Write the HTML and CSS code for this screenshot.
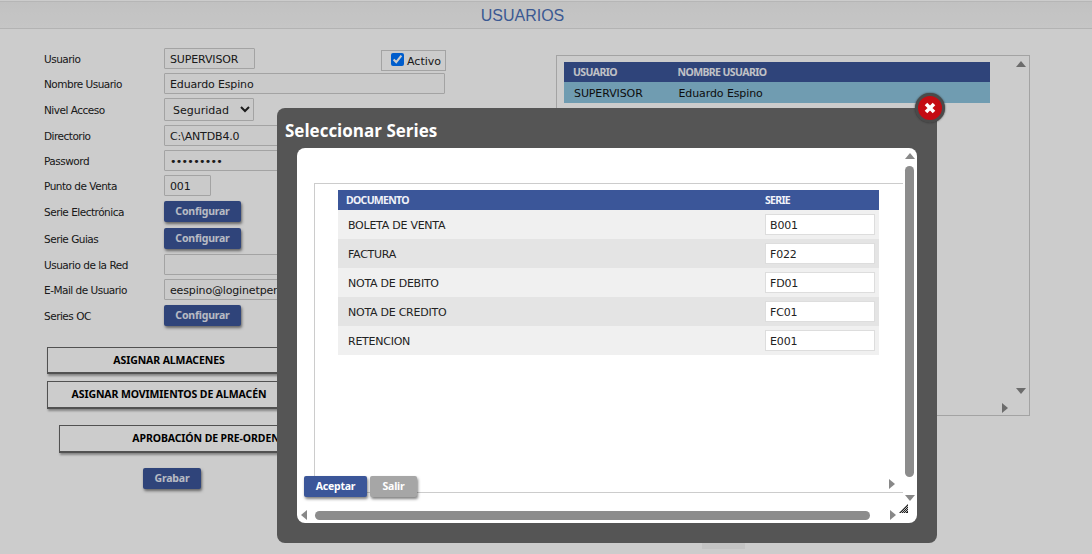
FILE: index.html
```html
<!DOCTYPE html>
<html lang="es">
<head>
<meta charset="utf-8">
<title>Usuarios</title>
<link rel="stylesheet" href="styles.css">
</head>
<body>
<header class="topbar"><h1>USUARIOS</h1></header>
<main class="content">
  <section class="form">
    <div class="row h25"><label>Usuario</label><input class="f91" value="SUPERVISOR"><label class="active"><input type="checkbox" checked> <span class="active-text">Activo</span></label></div>
    <div class="row h25"><label>Nombre Usuario</label><input class="f281" value="Eduardo Espino"></div>
    <div class="row h27 nudge"><label>Nivel Acceso</label><select class="sel"><option>Seguridad</option></select></div>
    <div class="row h25"><label>Directorio</label><input class="f281" value="C:\ANTDB4.0"></div>
    <div class="row h25"><label>Password</label><input class="f281 pass" type="password" value="123456789"></div>
    <div class="row h26"><label>Punto de Venta</label><input class="f47" value="001"></div>
    <div class="row h27"><label>Serie Electrónica</label><button class="btn cfg">Configurar</button></div>
    <div class="row h26"><label>Serie Guias</label><button class="btn cfg">Configurar</button></div>
    <div class="row h25"><label>Usuario de la Red</label><input class="f281"></div>
    <div class="row h26"><label>E-Mail de Usuario</label><input class="f281" value="eespino@loginetperu.com"></div>
    <div class="row h21"><label>Series OC</label><button class="btn cfg">Configurar</button></div>
    <button class="wide first">ASIGNAR ALMACENES</button>
    <button class="wide second">ASIGNAR MOVIMIENTOS DE ALMACÉN</button>
    <button class="wide third">APROBACIÓN DE PRE-ORDEN</button>
    <button class="btn save">Grabar</button>
  </section>
  <section class="panel">
    <table class="users">
      <thead><tr><th class="uc">USUARIO</th><th>NOMBRE USUARIO</th></tr></thead>
      <tbody><tr><td>SUPERVISOR</td><td>Eduardo Espino</td></tr></tbody>
    </table>
    <i class="arrow up panel-up"></i>
    <i class="arrow down panel-down"></i>
    <i class="arrow right panel-right"></i>
  </section>
</main>
<div class="stub"></div>
<div class="overlay"></div>
<div class="modal">
  <h2>Seleccionar Series</h2>
  <button class="close" aria-label="Cerrar">
    <svg width="14" height="14" viewBox="0 0 14 14"><path d="M3 3l8 8M11 3l-8 8" stroke="#fff" stroke-width="3.6"/></svg>
  </button>
  <div class="sheet">
    <div class="frame">
      <table class="series">
        <thead><tr><th>DOCUMENTO</th><th>SERIE</th></tr></thead>
        <tbody>
          <tr><td>BOLETA DE VENTA</td><td><input value="B001"></td></tr>
          <tr><td>FACTURA</td><td><input value="F022"></td></tr>
          <tr><td>NOTA DE DEBITO</td><td><input value="FD01"></td></tr>
          <tr><td>NOTA DE CREDITO</td><td><input value="FC01"></td></tr>
          <tr><td>RETENCION</td><td><input value="E001"></td></tr>
        </tbody>
      </table>
    </div>
    <div class="actions"><button class="btn ok">Aceptar</button><button class="btn exit">Salir</button></div>
    <i class="arrow up m-up"></i>
    <i class="thumb-v"></i>
    <i class="arrow down m-down"></i>
    <i class="arrow left m-left"></i>
    <i class="thumb-h"></i>
    <i class="arrow right m-right"></i>
    <i class="arrow right m-inner"></i>
    <svg class="grip" width="9" height="9" viewBox="0 0 9 9"><path d="M9 0v9H0z" fill="#222"/><path d="M9 2L2 9M9 4L4 9M9 6L6 9" stroke="#fff" stroke-width=".7"/></svg>
  </div>
</div>
</body>
</html>
```
FILE: styles.css
```css
* { box-sizing: border-box; }
html, body { margin: 0; height: 554px; overflow: hidden; }
body { background: #fff; font-family: "DejaVu Sans", sans-serif; color: #222; position: relative; }

.topbar { height: 28px; margin-top: 1px; background: linear-gradient(#f2f2f2, #f8f8f8); border-top: 1px solid #e4e4e4; border-bottom: 1px solid #e0e0e0; display: flex; justify-content: center; }
.topbar h1 { margin: 0 0 0 -47px; font: 400 16px/27px "Liberation Sans", sans-serif; color: #4a70b8; }

.content { display: flex; padding-left: 44px; }
.form { width: 512px; padding-top: 19px; }
.row { display: flex; align-items: flex-start; }
.row > label:first-child { width: 120px; font-size: 10.5px; line-height: 21px; letter-spacing: -.5px; padding-top: 1px; }
.nudge > label:first-child { padding-top: 2px; }
.h25 { height: 25px; } .h26 { height: 26px; } .h27 { height: 27px; } .h21 { height: 21px; }

input { font: 11px "DejaVu Sans", sans-serif; color: #222; letter-spacing: -.15px; }
.form input:not([type=checkbox]) { height: 21px; border: 1px solid #ccc; background: #fdfdfd; padding: 1px 5px 0; border-radius: 1px; }
.form .pass { letter-spacing: -.7px; }
.f91 { width: 91px; } .f281 { width: 281px; } .f47 { width: 47px; }
.active { margin: 2px 0 0 126px; width: 65px; height: 21px; border: 1px solid #ccc; padding-left: 9px; display: flex; gap: 3px; align-items: center; }
.active input { margin: -3px 0 0; width: 13px; height: 13px; }
.active-text { font-size: 11px; line-height: 19px; padding-top: 2px; }
.sel { width: 90px; height: 23px; font: 11px "DejaVu Sans", sans-serif; color: #222; background: #fdfdfd; border: 1px solid #ccc; padding: 1px 0 0 4px; border-radius: 1px; }

.btn { border: 0; border-radius: 2px; color: #fff; font: 700 10.5px/20px "Noto Sans", sans-serif; letter-spacing: -.2px; height: 21px; padding: 0 0 1px; box-shadow: 1px 2px 3px rgba(0,0,0,.5); }
.cfg { width: 77px; background: #3b5699; color: #e6eaf5; }
.wide { display: block; height: 28px; border: 1px solid #666; border-bottom-width: 2px; background: #fff; font: 700 10.5px "Noto Sans", sans-serif; letter-spacing: -.1px; color: #000; box-shadow: 1px 2px 2px rgba(0,0,0,.35); padding: 0 0 2px; }
.first { width: 244px; margin: 21px 0 0 3px; height: 27px; padding: 0; }
.second { width: 244px; margin: 7px 0 0 3px; }
.third { width: 294px; margin: 16px 0 0 15px; }
.save { display: block; width: 58px; margin: 15px 0 0 99px; background: #3b5699; color: #e6eaf5; }

.panel { position: relative; margin-top: 26px; width: 474px; height: 361px; border: 1px solid #ccc; padding: 6px 7px; }
table { border-collapse: collapse; }
.users { width: 426px; font-size: 11px; letter-spacing: -.1px; }
.users th { height: 20px; background: #3b5699; color: #f0f2f8; font: 700 10.5px "Noto Sans", sans-serif; letter-spacing: -.6px; text-align: left; padding: 0 0 0 9px; }
.users th:last-child { padding-left: 0; }
.users .uc { width: 113.5px; }
.users td { height: 21px; background: #8cc3de; color: #111; padding: 2px 0 0 10px; }
.users td:last-child { padding-left: 1px; }

.arrow { position: absolute; width: 0; height: 0; border: 5px solid transparent; }
.up { border-top-width: 0; border-bottom: 6px solid #888; }
.down { border-bottom-width: 0; border-top: 6px solid #888; }
.right { border-right-width: 0; border-left: 6px solid #888; }
.left { border-left-width: 0; border-right: 6px solid #888; }
.panel-up { top: 5px; left: 459px; }
.panel-down { top: 332px; left: 459px; }
.panel-right { top: 347px; left: 445px; }

.stub { position: absolute; left: 702px; top: 543px; width: 43px; height: 6px; background: #f4f4f4; }
.overlay { position: absolute; inset: 0; background: rgba(0,0,0,.2); }

.modal { position: absolute; left: 277px; top: 108px; width: 660px; height: 435px; background: #555; border-radius: 8px; padding: 0 20px 20px; }
.modal h2 { margin: 0 0 0 -12px; height: 40px; font: 700 17px/46px "Open Sans", sans-serif; color: #fff; }
.close { position: absolute; left: 638px; top: -15px; width: 30px; height: 30px; border-radius: 50%; background: #c40b12; border: 3px solid #4a4a4a; box-shadow: 0 0 2px #333; padding: 0; display: flex; align-items: center; justify-content: center; }
.close svg { flex: none; }
.sheet { position: relative; width: 620px; height: 375px; background: #fff; border-radius: 8px; padding: 35px 14px 0 17px; }
.frame { height: 310px; border: 1px solid #ccc; border-right: 0; padding: 6px 0 0 23px; }
.series { width: 541px; font-size: 11px; }
.series th { height: 20px; background: #3b5699; color: #f0f2f8; font: 700 10.5px "Noto Sans", sans-serif; letter-spacing: -.7px; text-align: left; padding: 0 0 0 8px; }
.series th:last-child { width: 114px; padding-left: 0; }
.series td { height: 29px; padding: 2px 0 0 10px; color: #222; letter-spacing: -.25px; }
.series td:last-child { padding: 0; }
.series tr:nth-child(odd) td { background: #f0f0f0; }
.series tr:nth-child(even) td { background: #e4e4e4; }
.series input { display: block; width: 110px; height: 21px; border: 1px solid #ddd; background: #fff; padding: 1px 4px 0; }

.actions { position: absolute; left: 7px; top: 328px; display: flex; gap: 3px; }
.ok { width: 63px; background: #3b5699; }
.exit { width: 47px; background: #a6a6a6; }
.thumb-v { position: absolute; left: 608px; top: 18px; width: 9px; height: 311px; background: #8c8c8c; border-radius: 5px; }
.thumb-h { position: absolute; left: 18px; top: 363px; width: 555px; height: 9px; background: #8c8c8c; border-radius: 5px; }
.m-up { left: 608px; top: 5px; }
.m-down { left: 608px; top: 347px; }
.m-left { left: 4px; top: 362px; }
.m-right { left: 593px; top: 362px; }
.m-inner { left: 592px; top: 331px; }
.grip { position: absolute; left: 602px; top: 356px; }
```
